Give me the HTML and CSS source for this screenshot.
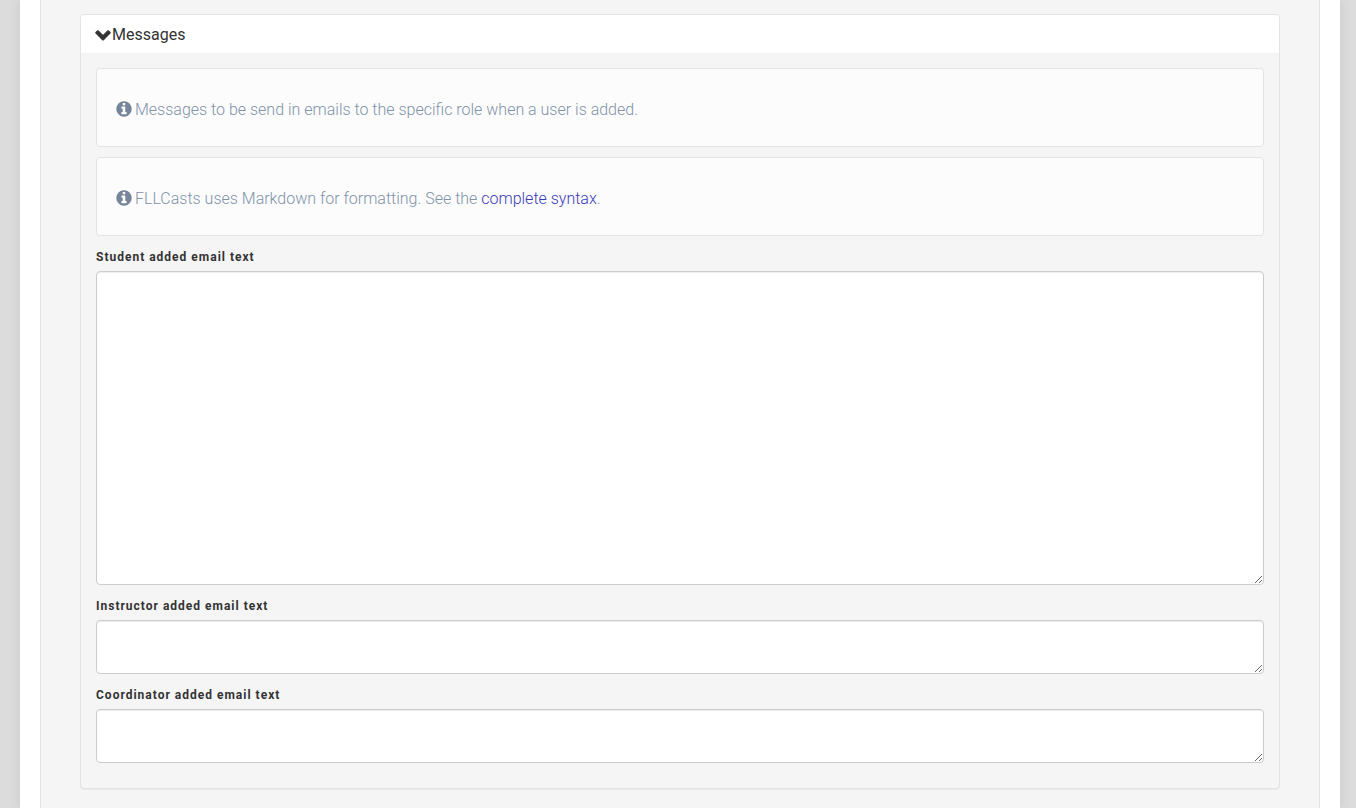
FILE: index.html
```html
<!DOCTYPE html>
<html lang="en">

<head>
    <meta charset="UTF-8">
    <title>Messages</title>
    <link rel="stylesheet" href="styles.css">
</head>

<body>
    <div class="page">
        <div class="content">
            <div class="panel">
                <div class="panel-heading">
                    <svg class="chevron" viewBox="0 0 1792 1792"><path d="M1683 808l-742 741q-19 19-45 19t-45-19L109 808q-19-19-19-45.5t19-45.5l166-165q19-19 45-19t45 19l531 531 531-531q19-19 45-19t45 19l166 165q19 19 19 45.5t-19 45.5z"/></svg>Messages
                </div>
                <div class="panel-body">
                    <div class="well">
                        <svg class="info" viewBox="0 0 1792 1792"><path d="M1152 1376v-160q0-14-9-23t-23-9h-96V672q0-14-9-23t-23-9H672q-14 0-23 9t-9 23v160q0 14 9 23t23 9h96v320h-96q-14 0-23 9t-9 23v160q0 14 9 23t23 9h448q14 0 23-9t9-23zm-128-896V320q0-14-9-23t-23-9H800q-14 0-23 9t-9 23v160q0 14 9 23t23 9h192q14 0 23-9t9-23zm640 416q0 209-103 385.500T1281.500 1561 896 1664t-385.500-103T231 1281.500 128 896t103-385.500T510.500 231 896 128t385.500 103T1561 510.500 1664 896z"/></svg>Messages to be send in emails to the specific role when a user is added.
                    </div>
                    <div class="well">
                        <svg class="info" viewBox="0 0 1792 1792"><path d="M1152 1376v-160q0-14-9-23t-23-9h-96V672q0-14-9-23t-23-9H672q-14 0-23 9t-9 23v160q0 14 9 23t23 9h96v320h-96q-14 0-23 9t-9 23v160q0 14 9 23t23 9h448q14 0 23-9t9-23zm-128-896V320q0-14-9-23t-23-9H800q-14 0-23 9t-9 23v160q0 14 9 23t23 9h192q14 0 23-9t9-23zm640 416q0 209-103 385.500T1281.500 1561 896 1664t-385.500-103T231 1281.500 128 896t103-385.500T510.500 231 896 128t385.500 103T1561 510.500 1664 896z"/></svg>FLLCasts uses Markdown for formatting. See the <a href="#">complete syntax</a>.
                    </div>
                    <div class="field">
                        <label for="student">Student added email text</label>
                        <textarea id="student" class="tall"></textarea>
                    </div>
                    <div class="field">
                        <label for="instructor">Instructor added email text</label>
                        <textarea id="instructor"></textarea>
                    </div>
                    <div class="field">
                        <label for="coordinator">Coordinator added email text</label>
                        <textarea id="coordinator"></textarea>
                    </div>
                </div>
            </div>
        </div>
    </div>
</body>

</html>
```

FILE: styles.css
```css
html,
body {
    height: 100%;
}

body {
    margin: 0;
    padding: 0 16px 0 20px;
    overflow: hidden;
    background: #dcdcdc;
    font-family: Roboto, sans-serif;
    color: #333;
}

.page {
    height: 100%;
    padding: 0 20px;
    background: #fff;
    box-sizing: border-box;
    box-shadow: 0 0 12px rgba(0, 0, 0, 0.08);
}

.content {
    height: 100%;
    padding: 14px 39px 0;
    background: #f5f5f5;
    border: solid #e3e3e3;
    border-width: 0 1px;
    box-sizing: border-box;
}

.panel {
    background: #f5f5f5;
    border: 1px solid #e3e3e3;
    border-radius: 4px;
    box-shadow: 0 1px 1px rgba(0, 0, 0, 0.05);
}

.panel-heading {
    display: flex;
    align-items: center;
    height: 38px;
    padding: 0 14px;
    background: #fff;
    border-radius: 4px 4px 0 0;
    font-size: 16px;
}

.chevron {
    width: 16px;
    height: 16px;
    margin-right: 1px;
    fill: #333;
    stroke: #333;
    stroke-width: 120;
}

.panel-body {
    padding: 15px 15px 25px;
}

.well {
    height: 79px;
    margin-bottom: 10px;
    padding: 29px 19px 0;
    background: #fcfcfc;
    border: 1px solid #e3e3e3;
    border-radius: 4px;
    box-sizing: border-box;
    font-size: 16px;
    line-height: 23px;
    font-weight: 300;
    color: #8093a9;
}

.well a {
    color: #3a3ab8;
    text-decoration: none;
}

.info {
    width: 18px;
    height: 18px;
    margin: 0 2px 0 -1px;
    vertical-align: -2.5px;
    fill: #76859a;
}

.field {
    margin-top: 14px;
}

label {
    display: block;
    height: 15px;
    margin-bottom: 6px;
    line-height: 15px;
    font-size: 12px;
    font-weight: 700;
    letter-spacing: 1px;
}

textarea {
    display: block;
    width: 100%;
    height: 54px;
    padding: 6px 12px;
    background: #fff;
    border: 1px solid #ccc;
    border-radius: 4px;
    box-sizing: border-box;
    box-shadow: inset 0 1px 1px rgba(0, 0, 0, 0.075);
}

.tall {
    height: 314px;
}
```
